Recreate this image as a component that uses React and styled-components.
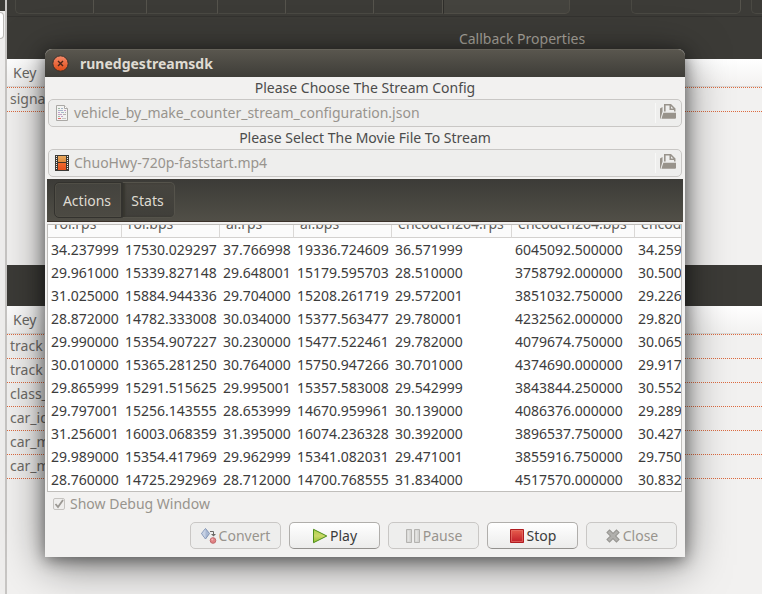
import React from "react";
import styled, { createGlobalStyle } from "styled-components";

const GlobalStyle = createGlobalStyle`
  * { box-sizing: border-box; }
  html, body, #root { height: 100%; }
  body {
    margin: 0;
    overflow: hidden;
    background: #f2f1f0;
    color: #4c4c4c;
    font: 14px/20px "Noto Sans", "Open Sans", sans-serif;
  }
  button, input, table { font: inherit; color: inherit; }
`;

const Desktop = styled.div`
  position: relative;
  display: flex;
  height: 100%;
  overflow: hidden;
`;

const SidePane = styled.div`
  flex: none;
  display: flex;
  flex-direction: column;
  width: 7px;
  background: #efeeed;
  border-right: 2px solid #c8c6c4;
`;

const SideHeader = styled.div`
  height: 11px;
  background: #3c3b37;
`;

const SideField = styled.div`
  width: 4px;
  height: 27px;
  margin-top: 1px;
  background: #ffffff;
  border: 1px solid #bdbbb8;
  border-left: 0;
  border-radius: 0 4px 4px 0;
`;

const MainPane = styled.main`
  flex: none;
  width: 1030px;
  min-width: 100%;
`;

const TopToolbar = styled.nav`
  display: flex;
  height: 43px;
  margin-top: -26px;
  padding: 0 8px;
  background: #3c3b37;
  border-bottom: 1px solid #33322f;
`;

const ToolButton = styled.button`
  flex: none;
  width: ${(p) => p.$width}px;
  height: 40px;
  margin-left: ${(p) => p.$gap || 0}px;
  padding: 4px 0 14px ${(p) => p.$indent || 0}px;
  text-align: left;
  line-height: 20px;
  color: #d8d5cd;
  background: ${(p) => (p.$active ? "#44433e" : "#3c3b37")};
  border: 1px solid ${(p) => (p.$active ? "#504e47" : "#4a4943")};
  border-left-color: ${(p) => (p.$active ? "#2e2d2a" : p.$first ? "#4a4943" : "transparent")};
  border-right-color: ${(p) => (p.$active ? "#504e47" : "#55534c")};
  border-radius: ${(p) => (p.$first ? 5 : 0)}px ${(p) => (p.$last ? 5 : 0)}px ${(p) => (p.$last ? 5 : 0)}px
    ${(p) => (p.$first ? 5 : 0)}px;
`;

const SectionBar = styled.header`
  display: flex;
  align-items: center;
  justify-content: center;
  height: ${(p) => p.$height}px;
  padding-top: 2px;
  background: #3c3b37;
  color: #aaa69e;
`;

const Section = styled.section`
  height: ${(p) => p.$height};
`;

const KeyTable = styled.table`
  width: 100%;
  border-collapse: separate;
  border-spacing: 0;
`;

const KeyHead = styled.th`
  height: 28px;
  padding: 0 6px;
  text-align: left;
  font-weight: 400;
  color: #6a6864;
  background: linear-gradient(#ffffff, #f3f2f1);
  border-bottom: 1px solid #dcdad8;
`;

const dots = "repeating-linear-gradient(90deg, #dd6b40 0 1px, transparent 1px 2px)";

const KeyCell = styled.td`
  height: ${(p) => (p.$first ? 25 : 24)}px;
  padding: 0 3px ${(p) => (p.$first ? 1 : 2)}px;
  color: #6f6c68;
  background: ${(p) => (p.$first ? `${dots} top / 100% 1px no-repeat, ` : "")}${dots} bottom / 100% 1px no-repeat;
`;

const Dialog = styled.div`
  position: absolute;
  top: 49px;
  left: 45px;
  right: 77px;
  border-radius: 7px 7px 0 0;
  background: #f2f1f0;
  box-shadow: 0 8px 44px rgba(0, 0, 0, 0.5), 0 3px 16px rgba(0, 0, 0, 0.45);
`;

const TitleBar = styled.header`
  display: flex;
  align-items: center;
  gap: 11px;
  height: 28px;
  padding: 0 7px;
  border-radius: 7px 7px 0 0;
  border-top: 1px solid #65625a;
  background: linear-gradient(#59564e, #3e3d38);
`;

const WindowClose = styled.button`
  display: flex;
  padding: 0;
  border: 0;
  background: none;
`;

const Title = styled.h1`
  margin: 0;
  font-size: 14px;
  line-height: 20px;
  font-weight: 700;
  color: #dfdbd2;
`;

const Body = styled.div`
  padding: 0 2px 8px;
`;

const Caption = styled.div`
  height: 22px;
  line-height: 22px;
  text-align: center;
  color: #4c4c4c;
`;

const FileButton = styled.button`
  display: flex;
  align-items: center;
  width: calc(100% - 2px);
  height: 28px;
  margin: 0 1px;
  padding: 0 4px;
  gap: 3px;
  text-align: left;
  color: #98948d;
  background: #eeeeed;
  border: 1px solid #c9c7c5;
  border-radius: 5px;
`;

const FileName = styled.span`
  flex: 1;
  height: 20px;
  border-right: 1px solid #f8f8f7;
`;

const TabBar = styled.div`
  display: flex;
  height: 43px;
  margin-top: 2px;
  padding: 3px 7px;
  background: linear-gradient(#3c3b37, #514f47);
  border-bottom: 1px solid #3a3029;
`;

const TabButton = styled.button`
  width: ${(p) => p.$width}px;
  padding: 2px 2px 0 0;
  color: #dfdbd2;
  background: ${(p) => (p.$active ? "linear-gradient(#47453f, #403f3a)" : "linear-gradient(#44433e, #4c4a43)")};
  border: 1px solid ${(p) => (p.$active ? "#55534b" : "#33322e")};
  border-left-color: #33322e;
  border-radius: ${(p) => (p.$active ? "0 5px 5px 0" : "5px 0 0 5px")};
  box-shadow: ${(p) => (p.$active ? "inset 2px 0 2px #37362f" : "inset 0 0 0 1px #504e46")};
`;

const StatsFrame = styled.div`
  height: 268px;
  margin: 2px 1px 0 0;
  overflow: hidden;
  background: #ffffff;
  border: 1px solid #c0bebb;
`;

const StatsTable = styled.table`
  width: 710px;
  margin-top: -12px;
  table-layout: fixed;
  border-collapse: separate;
  border-spacing: 0;
`;

const StatsHead = styled.th`
  width: ${(p) => p.$width}px;
  height: 25px;
  padding: 0 6px 2px;
  text-align: left;
  font-weight: 400;
  line-height: 20px;
  white-space: nowrap;
  color: #5c5a57;
  background: #fbfbfb;
  border-right: 1px solid #dad8d6;
  border-bottom: 1px solid #d3d1cf;
`;

const StatsCell = styled.td`
  height: 23px;
  padding: 0 0 0 3px;
  line-height: 20px;
  white-space: nowrap;
  color: #3c3c3c;
`;

const CheckRow = styled.label`
  display: flex;
  align-items: center;
  gap: 5px;
  height: 24px;
  padding-left: 6px;
  color: #98948d;
`;

const CheckWrap = styled.span`
  display: grid;
  > * { grid-area: 1 / 1; }
`;

const CheckBox = styled.input`
  appearance: none;
  width: 12px;
  height: 12px;
  margin: 0;
  border: 1px solid #c5c3c0;
  border-radius: 2px;
  background: #efeeed;
`;

const ButtonRow = styled.div`
  display: flex;
  justify-content: flex-end;
  gap: 8px;
  padding: 6px 6px 0;
`;

const ActionButton = styled.button`
  display: flex;
  align-items: center;
  justify-content: center;
  gap: 2px;
  width: 91px;
  height: 27px;
  padding: 0;
  color: #3c3c3c;
  background: linear-gradient(#ffffff, #ececeb);
  border: 1px solid #b0aeab;
  border-bottom-color: #93918e;
  border-radius: 5px;
  &:disabled {
    color: #98948d;
    background: #eeeeed;
    border-color: #c9c7c5;
  }
`;

const Icon = styled.svg`
  display: block;
  flex: none;
`;

const CloseDot = () => (
  <Icon width="17" height="17" viewBox="0 0 17 17">
    <defs>
      <linearGradient id="dot" x1="0" y1="0" x2="0" y2="1">
        <stop offset="0" stopColor="#f58a6a" />
        <stop offset="1" stopColor="#df4b16" />
      </linearGradient>
    </defs>
    <circle cx="8.5" cy="8.5" r="7.7" fill="url(#dot)" stroke="#38322c" />
    <path d="M6 6l5 5M11 6l-5 5" stroke="#4a2418" strokeWidth="1.4" />
  </Icon>
);

const DocumentIcon = () => (
  <Icon width="18" height="18" viewBox="0 0 18 18">
    <path d="M3.5 1.5h8l3 3v12h-11z" fill="#f3f3f2" stroke="#aaa8a5" />
    <path d="M11.5 1.5v3h3" fill="#ffffff" stroke="#aaa8a5" />
    <path d="M5 4.5h2M5 12.5h2" stroke="#9fb8a4" />
    <path d="M8 4.5h2M5 6.5h5M8 8.5h3" stroke="#a6b6c9" />
    <path d="M5 8.5h2M11 6.5h2M5 10.5h4M8 12.5h2" stroke="#c3a1c9" />
    <path d="M10 10.5h3M12 8.5h1" stroke="#b5b3b0" />
    <path d="M5 14.5h3" stroke="#e06d6d" />
    <path d="M9 14.5h4" stroke="#c9c7c5" />
  </Icon>
);

const FilmIcon = () => (
  <Icon width="18" height="18" viewBox="0 0 18 18">
    <defs>
      <linearGradient id="film" x1="0" y1="0" x2="0" y2="1">
        <stop offset="0" stopColor="#e8a85c" />
        <stop offset="0.45" stopColor="#e08a3c" />
        <stop offset="0.55" stopColor="#f0662c" />
        <stop offset="1" stopColor="#e4501c" />
      </linearGradient>
    </defs>
    <path d="M2 1h14v16H2z" fill="#3c3a36" />
    <path d="M5 2h8v14H5z" fill="url(#film)" />
    <path d="M5 8.5h8" stroke="#4a3222" />
    <path d="M3.5 2v14M14.5 2v14" stroke="#f2f1f0" strokeDasharray="1 1" />
  </Icon>
);

const OpenIcon = () => (
  <Icon width="18" height="18" viewBox="0 0 18 18">
    <path
      d="M5 7.5V0h7l4.500 4.500V7.500h-1.500V6h-4.500V1.600H6.600V7.500z"
      fill="#98938b"
    />
    <path d="M12 2.200v2.300h2.400z" fill="#eeeeed" />
    <path d="M1 4.500L3.500 3v4.500L1.500 14.700H1z" fill="#98938b" />
    <path d="M4.300 8.800H17v5.200l-.700.700H2.500z" fill="#98938b" />
  </Icon>
);

const TickIcon = () => (
  <Icon width="12" height="12" viewBox="0 0 12 12">
    <path d="M2.5 6l2.500 3 5-7" fill="none" stroke="#9b9893" strokeWidth="1.8" />
  </Icon>
);

const ConvertIcon = () => (
  <Icon width="16" height="16" viewBox="0 0 16 16">
    <path d="M4.5 .5l4 5-4 5.500-4-5.500z" fill="#a9b9d3" stroke="#8295b5" />
    <path d="M4.500 1v9.500L1 5.500z" fill="#c7d2e4" />
    <path d="M9 3.500h3.500v3" fill="none" stroke="#6b6966" />
    <path d="M10 6h5l-2.500 2.500z" fill="#6b6966" />
    <circle cx="12" cy="12.5" r="2.8" fill="#e08284" stroke="#c0686b" />
    <circle cx="11.3" cy="11.6" r="1" fill="#f2b4b4" />
  </Icon>
);

const PlayIcon = () => (
  <Icon width="16" height="16" viewBox="0 0 16 16">
    <defs>
      <linearGradient id="play" x1="0" y1="0" x2="0" y2="1">
        <stop offset="0" stopColor="#a9cf45" />
        <stop offset="0.5" stopColor="#cbd868" />
        <stop offset="1" stopColor="#8fbf2b" />
      </linearGradient>
    </defs>
    <path d="M1.500 1.300v13.400L14.800 8z" fill="url(#play)" stroke="#4f8f1c" />
  </Icon>
);

const PauseIcon = () => (
  <Icon width="16" height="16" viewBox="0 0 16 16">
    <path d="M1.500 1.500h5v13h-5zM9.500 1.500h5v13h-5z" fill="#d3d3d1" stroke="#b4b3b0" />
    <path d="M2.500 2.500h2v11h-2zM10.500 2.500h2v11h-2z" fill="#e4e4e2" />
  </Icon>
);

const StopIcon = () => (
  <Icon width="16" height="16" viewBox="0 0 16 16">
    <defs>
      <linearGradient id="stop" x1="0" y1="0" x2="0" y2="1">
        <stop offset="0" stopColor="#e8604e" />
        <stop offset="1" stopColor="#c01c28" />
      </linearGradient>
    </defs>
    <path d="M1.500 1.500h13v13h-13z" fill="url(#stop)" stroke="#b01c20" />
    <path d="M2.500 2.500h11v11h-11z" fill="none" stroke="#e67a70" strokeOpacity="0.6" />
  </Icon>
);

const CrossIcon = () => (
  <Icon width="16" height="16" viewBox="0 0 16 16">
    <path d="M4.500 4.500l7 7M11.500 4.500l-7 7" stroke="#969591" strokeWidth="4.6" strokeLinecap="square" />
    <path d="M4.500 4.500l7 7M11.500 4.500l-7 7" stroke="#b0afac" strokeWidth="2.6" strokeLinecap="square" />
  </Icon>
);

const columns = [
  { label: "roi.rps", width: 74 },
  { label: "roi.bps", width: 98 },
  { label: "ai.rps", width: 74 },
  { label: "ai.bps", width: 98 },
  { label: "encodeh264.rps", width: 120 },
  { label: "encodeh264.bps", width: 123 },
  { label: "encod", width: 123 },
];

const rows = [
  ["34.237999", "17530.029297", "37.766998", "19336.724609", "36.571999", "6045092.500000", "34.259"],
  ["29.961000", "15339.827148", "29.648001", "15179.595703", "28.510000", "3758792.000000", "30.500"],
  ["31.025000", "15884.944336", "29.704000", "15208.261719", "29.572001", "3851032.750000", "29.226"],
  ["28.872000", "14782.333008", "30.034000", "15377.563477", "29.780001", "4232562.000000", "29.820"],
  ["29.990000", "15354.907227", "30.230000", "15477.522461", "29.782000", "4079674.750000", "30.065"],
  ["30.010000", "15365.281250", "30.764000", "15750.947266", "30.701000", "4374690.000000", "29.917"],
  ["29.865999", "15291.515625", "29.995001", "15357.583008", "29.542999", "3843844.250000", "30.552"],
  ["29.797001", "15256.143555", "28.653999", "14670.959961", "30.139000", "4086376.000000", "29.289"],
  ["31.256001", "16003.068359", "31.395000", "16074.236328", "30.392000", "3896537.750000", "30.427"],
  ["29.989000", "15354.417969", "29.962999", "15341.082031", "29.471001", "3855916.750000", "29.750"],
  ["28.760000", "14725.292969", "28.712000", "14700.768555", "31.834000", "4517570.000000", "30.832"],
];

const KeyList = ({ keys }) => (
  <KeyTable>
    <thead>
      <tr><KeyHead scope="col">Key</KeyHead></tr>
    </thead>
    <tbody>
      {keys.map((name, i) => (
        <tr key={i}><KeyCell $first={i === 0}>{name}</KeyCell></tr>
      ))}
    </tbody>
  </KeyTable>
);

export default function App() {
  return (
    <>
      <GlobalStyle />
      <Desktop>
        <SidePane>
          <SideHeader />
          <SideField />
        </SidePane>
        <MainPane>
          <TopToolbar>
            <ToolButton $width={79} $first />
            <ToolButton $width={53} $indent={20}>p</ToolButton>
            <ToolButton $width={71} $indent={53}>y</ToolButton>
            <ToolButton $width={68} />
            <ToolButton $width={88} $indent={70}>y</ToolButton>
            <ToolButton $width={69} $indent={51}>y</ToolButton>
            <ToolButton $width={127} $active $last />
            <ToolButton $width={110} $gap={61} $indent={34} $first $last>p</ToolButton>
            <ToolButton $width={110} $gap={10} $first $last />
          </TopToolbar>
          <Section $height="248px">
            <SectionBar $height={42}>Callback Properties</SectionBar>
            <KeyList keys={["signa"]} />
          </Section>
          <Section $height="auto">
            <SectionBar $height={41} />
            <KeyList keys={["track", "track", "class_", "car_id", "car_m", "car_m"]} />
          </Section>
        </MainPane>

        <Dialog role="dialog" aria-labelledby="dialog-title">
          <TitleBar>
            <WindowClose aria-label="Close window"><CloseDot /></WindowClose>
            <Title id="dialog-title">runedgestreamsdk</Title>
          </TitleBar>
          <Body>
            <Caption id="config-label">Please Choose The Stream Config</Caption>
            <FileButton disabled aria-describedby="config-label">
              <DocumentIcon />
              <FileName>vehicle_by_make_counter_stream_configuration.json</FileName>
              <OpenIcon />
            </FileButton>
            <Caption id="movie-label">Please Select The Movie File To Stream</Caption>
            <FileButton disabled aria-describedby="movie-label">
              <FilmIcon />
              <FileName>ChuoHwy-720p-faststart.mp4</FileName>
              <OpenIcon />
            </FileButton>
            <TabBar role="tablist">
              <TabButton role="tab" aria-selected="false" $width={68}>Actions</TabButton>
              <TabButton role="tab" aria-selected="true" $width={53} $active>Stats</TabButton>
            </TabBar>
            <StatsFrame>
              <StatsTable>
                <thead>
                  <tr>
                    {columns.map((c, i) => (
                      <StatsHead key={i} scope="col" $width={c.width}>{c.label}</StatsHead>
                    ))}
                  </tr>
                </thead>
                <tbody>
                  {rows.map((row, i) => (
                    <tr key={i}>
                      {row.map((value, j) => <StatsCell key={j}>{value}</StatsCell>)}
                    </tr>
                  ))}
                </tbody>
              </StatsTable>
            </StatsFrame>
            <CheckRow>
              <CheckWrap>
                <CheckBox type="checkbox" defaultChecked disabled />
                <TickIcon />
              </CheckWrap>
              Show Debug Window
            </CheckRow>
            <ButtonRow>
              <ActionButton disabled><ConvertIcon />Convert</ActionButton>
              <ActionButton><PlayIcon />Play</ActionButton>
              <ActionButton disabled><PauseIcon />Pause</ActionButton>
              <ActionButton><StopIcon />Stop</ActionButton>
              <ActionButton disabled><CrossIcon />Close</ActionButton>
            </ButtonRow>
          </Body>
        </Dialog>
      </Desktop>
    </>
  );
}
